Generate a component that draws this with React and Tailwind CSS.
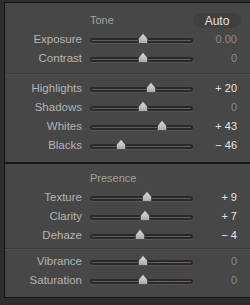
import React from "react";

const tone1 = [
  { label: "Exposure", value: "0.00", x: 142.7 },
  { label: "Contrast", value: "0", x: 142.7 },
];
const tone2 = [
  { label: "Highlights", value: "+ 20", x: 151, on: true },
  { label: "Shadows", value: "0", x: 142.7 },
  { label: "Whites", value: "+ 43", x: 162.3, on: true },
  { label: "Blacks", value: "− 46", x: 121, on: true },
];
const presence1 = [
  { label: "Texture", value: "+ 9", x: 146.7, on: true },
  { label: "Clarity", value: "+ 7", x: 145.3, on: true },
  { label: "Dehaze", value: "− 4", x: 140, on: true },
];
const presence2 = [
  { label: "Vibrance", value: "0", x: 142.7, color: true },
  { label: "Saturation", value: "0", x: 142.7, color: true },
];

const Thumb = ({ x }) => (
  <svg
    width="10"
    height="11"
    viewBox="0 0 10 11"
    className="absolute top-[3px]"
    style={{ left: x - 90 - 5 }}
  >
    <defs>
      <linearGradient id="thumbFill" x1="0" y1="0" x2="0" y2="1">
        <stop offset="0" stopColor="#dcdcdc" />
        <stop offset="1" stopColor="#a9a9a9" />
      </linearGradient>
    </defs>
    <path
      d="M5 0.6 Q5.4 0.6 6 1.4 L9.2 5.2 Q9.5 5.6 9.5 6.2 L9.5 9.8 Q9.5 10.5 8.8 10.5 L1.2 10.5 Q0.5 10.5 0.5 9.8 L0.5 6.2 Q0.5 5.6 0.8 5.2 L4 1.4 Q4.6 0.6 5 0.6 Z"
      fill="url(#thumbFill)"
      stroke="#3a3a3a"
      strokeWidth="0.7"
    />
  </svg>
);

const Row = ({ label, value, x, on, color }) => (
  <div className="flex h-[19px] items-center">
    <div className="w-[77px] text-right text-[11.5px] text-[#b4b4b4]">{label}</div>
    <div className="relative ml-[8px] h-[19px] w-[103px]">
      <div className="absolute left-0 right-0 top-[8px] h-[5px] rounded-full bg-[#2a2a2a] shadow-[0_1px_0_#565656]">
        <div
          className={
            color
              ? "mx-[2px] mt-[2px] h-[1px] bg-[linear-gradient(to_right,#5c5c5c_58%,#55756c_70%,#566090_82%,#7a5584_91%,#8e5060)]"
              : "mx-[2px] mt-[2px] h-[1px] bg-[#5c5c5c]"
          }
        />
      </div>
      <Thumb x={x} />
    </div>
    <div
      className={
        on
          ? "flex-1 pr-[13px] text-right text-[11px] text-[#e4e4e4]"
          : "flex-1 pr-[13px] text-right text-[11px] text-[#8a8a8a]"
      }
    >
      {value}
    </div>
  </div>
);

const Divider = () => (
  <div>
    <div className="h-[1px] bg-[#3c3c3c]" />
    <div className="h-[1px] bg-[#505050]" />
  </div>
);

export default function App() {
  return (
    <div
      className="h-[305px] w-[250px] overflow-hidden bg-[#2e2e2e] pl-[4px] pt-[2px]"
      style={{ fontFamily: '"Liberation Sans", Arial, sans-serif' }}
    >
      <div className="border-l border-[#141414]">
        {/* Tone */}
        <div className="border-t border-[#141414] bg-[#474747] pb-[7px] pt-[8px]">
          <div className="flex h-[19px] items-center">
            <div className="ml-[85px] text-[11px] text-[#a2a2a2]">Tone</div>
            <div className="ml-auto mr-[9px] flex h-[15px] w-[48px] items-center justify-center rounded-[8px] bg-[#404040] text-[12px] text-[#e2e2e2]">
              Auto
            </div>
          </div>
          {tone1.map((r) => (
            <Row key={r.label} {...r} />
          ))}
          <div className="mb-[4px] mt-[5px]">
            <Divider />
          </div>
          {tone2.map((r) => (
            <Row key={r.label} {...r} />
          ))}
        </div>

        {/* Presence */}
        <div className="border-b border-t-2 border-[#161616] bg-[#474747] pb-[7px] pt-[5px]">
          <div className="flex h-[19px] items-center">
            <div className="ml-[85px] text-[11px] text-[#a2a2a2]">Presence</div>
          </div>
          {presence1.map((r) => (
            <Row key={r.label} {...r} />
          ))}
          <div className="mb-[2px] mt-[3px]">
            <Divider />
          </div>
          {presence2.map((r) => (
            <Row key={r.label} {...r} />
          ))}
        </div>
      </div>
    </div>
  );
}
